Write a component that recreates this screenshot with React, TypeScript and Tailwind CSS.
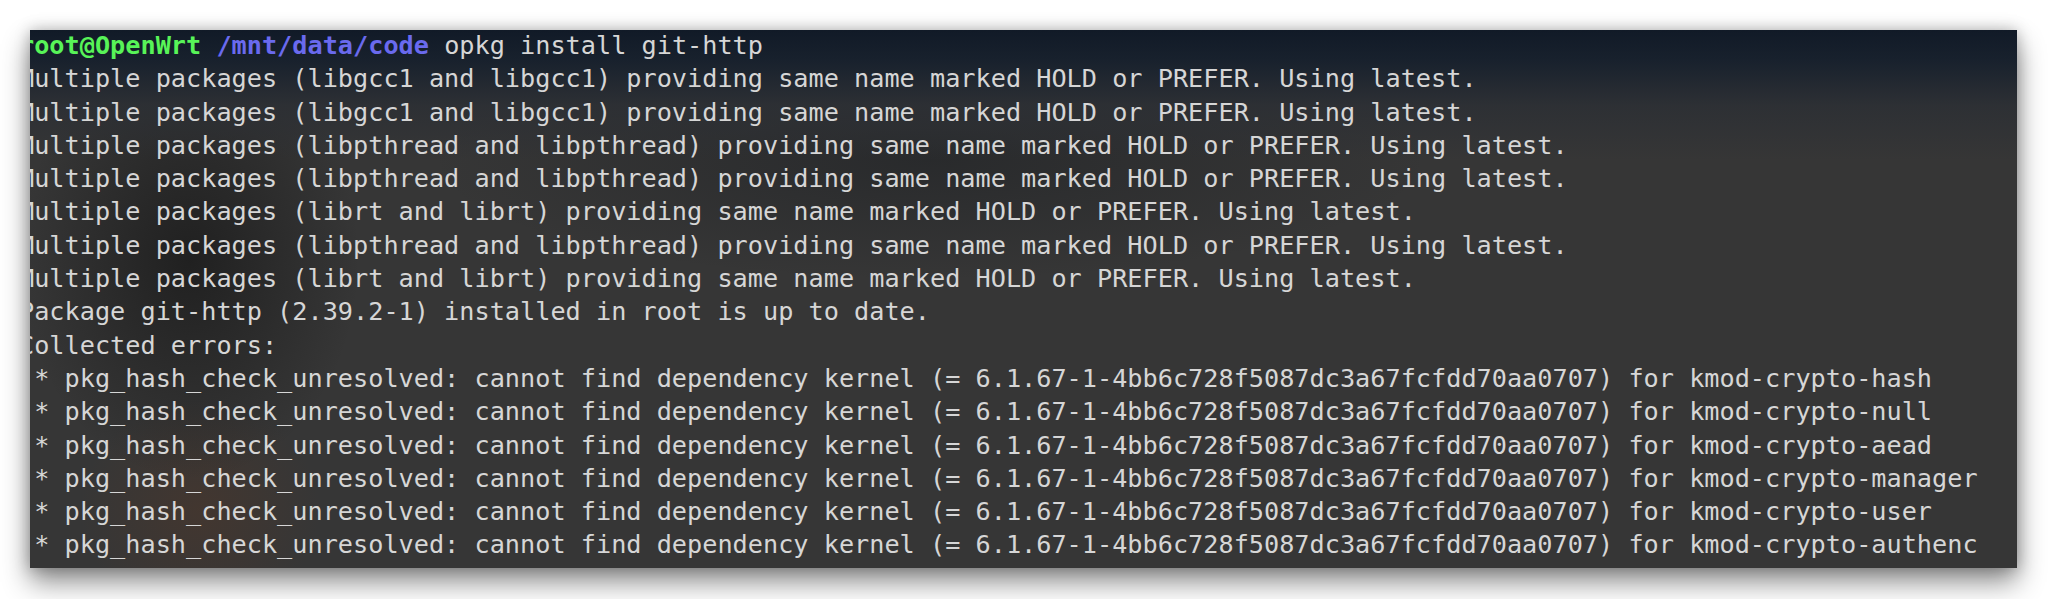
const dep =
  " * pkg_hash_check_unresolved: cannot find dependency kernel (= 6.1.67-1-4bb6c728f5087dc3a67fcfdd70aa0707) for kmod-crypto-";

const hold = (a: string) =>
  `Multiple packages (${a} and ${a}) providing same name marked HOLD or PREFER. Using latest.`;

const output = [
  hold("libgcc1"),
  hold("libgcc1"),
  hold("libpthread"),
  hold("libpthread"),
  hold("librt"),
  hold("libpthread"),
  hold("librt"),
  "Package git-http (2.39.2-1) installed in root is up to date.",
  "Collected errors:",
  dep + "hash",
  dep + "null",
  dep + "aead",
  dep + "manager",
  dep + "user",
  dep + "authenc",
];

function Prompt({ cmd }: { cmd: string }) {
  return (
    <div>
      <span className="font-bold text-[#58f458]">root@OpenWrt</span>{" "}
      <span className="font-bold text-[#6a6aee]">/mnt/data/code</span> {cmd}
    </div>
  );
}

export default function App() {
  return (
    <main className="h-[599px] w-[2048px] overflow-hidden bg-white pl-[30px] pt-[30px]">
      <div className="h-[538px] w-[1987px] overflow-hidden bg-[#363636] bg-[image:linear-gradient(180deg,#111a27_0px,#18212d_30px,rgba(44,47,52,0.9)_75px,rgba(54,54,54,0)_130px),radial-gradient(ellipse_170px_220px_at_160px_230px,rgba(18,18,18,0.6),rgba(18,18,18,0)),radial-gradient(ellipse_120px_110px_at_170px_480px,rgba(90,55,35,0.35),rgba(90,55,35,0)),radial-gradient(ellipse_500px_120px_at_900px_130px,rgba(25,28,32,0.45),rgba(25,28,32,0))] shadow-[0_14px_26px_rgba(0,0,0,0.45),0_0_14px_rgba(0,0,0,0.25)]">
        <div className="-ml-[11px] -mt-[1px] whitespace-pre font-['DejaVu_Sans_Mono',monospace] text-[25.22px] leading-[33.3px] text-[#d6d6d6]">
          <Prompt cmd="opkg install git-http" />
          {output.map((line, i) => (
            <div key={i}>{line}</div>
          ))}
          <Prompt cmd="opkg list-installed | grep libltdl" />
        </div>
      </div>
    </main>
  );
}
